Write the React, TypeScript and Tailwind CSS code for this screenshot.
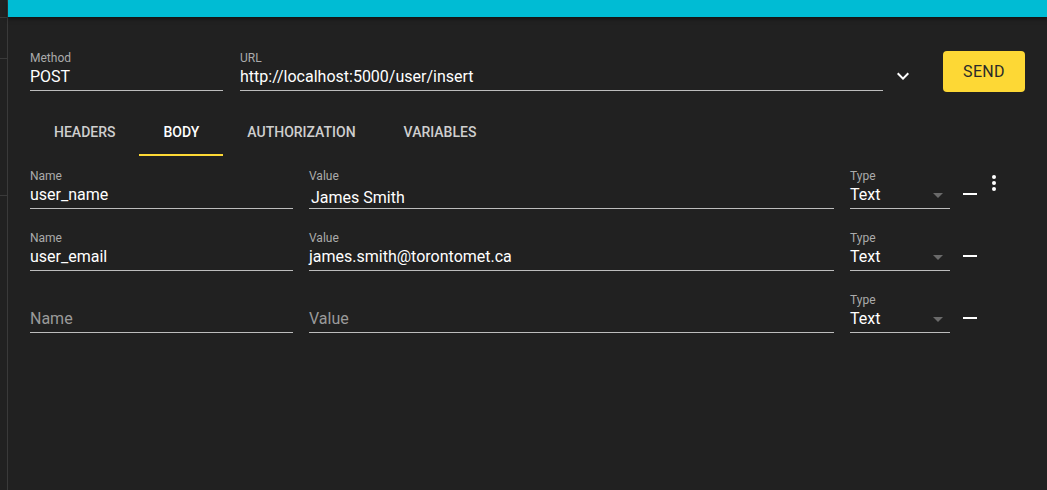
import React from 'react';

type FieldProps = {
  label?: string;
  value?: string;
  placeholder?: string;
  className?: string;
  inputClass?: string;
  children?: React.ReactNode;
};

function Field({ label, value, placeholder, className = '', inputClass = 'pt-[2px] pb-[4px]', children }: FieldProps) {
  return (
    <div className={`flex flex-col ${className}`}>
      <div className="h-[14px] text-[12px] leading-[14px] text-[#ababab]">{label ?? ''}</div>
      <div className={`relative border-b border-[#bdbdbd] text-[16px] leading-[19px] ${inputClass}`}>
        <div className="h-[19px] whitespace-nowrap">
          {value ? (
            <span className="text-white">{value}</span>
          ) : (
            <span className="text-[#9a9a9a]">{placeholder}</span>
          )}
        </div>
        {children}
      </div>
    </div>
  );
}

function MinusIcon() {
  return (
    <svg width="24" height="24" viewBox="0 0 24 24" fill="#ffffff">
      <path d="M19 13H5v-2h14v2z" />
    </svg>
  );
}

function DropArrow() {
  return (
    <svg className="absolute right-0 top-0" width="24" height="24" viewBox="0 0 24 24" fill="#6a6a6a">
      <path d="M7 10l5 5 5-5z" />
    </svg>
  );
}

const rows = [
  { name: 'user_name', value: 'James Smith', more: true },
  { name: 'user_email', value: 'james.smith@torontomet.ca', more: false },
  { name: '', value: '', more: false },
];

const tabs = ['HEADERS', 'BODY', 'AUTHORIZATION', 'VARIABLES'];

export default function App() {
  return (
    <div className="w-full h-[490px] bg-[#212121] flex font-['Roboto',sans-serif] overflow-hidden">
      {/* Collapsed sidebar */}
      <div className="w-[8px] h-full border-r border-[#3a3a3a] flex flex-col">
        <div className="h-[18px] border-b border-[#3a3a3a]" />
        <div className="h-[41px] border-b border-[#3a3a3a]" />
        <div className="h-[137px] border-b border-[#3a3a3a]" />
      </div>

      <div className="flex-1 flex flex-col">
        {/* App bar */}
        <div className="h-[17px] bg-[#00bcd4] shadow-[0_2px_4px_rgba(0,0,0,0.5)]" />

        <div className="px-[22px] pt-[34px] flex flex-col">
          {/* Request line */}
          <div className="flex items-start">
            <Field label="Method" value="POST" className="w-[193px]" />
            <Field label="URL" value="http://localhost:5000/user/insert" className="flex-1 ml-[17px]" />
            <div className="ml-[8px] mt-[13px] w-[24px] h-[24px]">
              <svg width="24" height="24" viewBox="0 0 24 24" fill="#ffffff">
                <path d="M16.59 8.59 12 13.17 7.41 8.59 6 10l6 6 6-6z" />
              </svg>
            </div>
            <button className="ml-[28px] w-[82px] h-[41px] rounded-[4px] bg-[#fdd835] text-[#2a2a2a] text-[16px] leading-none tracking-[0.02em]">
              SEND
            </button>
          </div>

          {/* Tabs */}
          <div className="flex mt-[16px] h-[48px]">
            {tabs.map((t) => (
              <div
                key={t}
                className={`h-[48px] px-[24px] pt-[2px] flex items-center border-b-2 text-[14px] leading-5 font-medium ${
                  t === 'BODY' ? 'border-[#fdd835] text-white' : 'border-transparent text-[#cfcfcf]'
                }`}
              >
                {t}
              </div>
            ))}
          </div>

          {/* Body params */}
          <div className="mt-[13px] flex flex-col gap-[22px]">
            {rows.map((r, i) => (
              <div key={i} className="flex items-end">
                <Field label={r.name ? 'Name' : ''} value={r.name} placeholder="Name" className="w-[263px]" />
                <Field
                  label={r.value ? 'Value' : ''}
                  value={r.value}
                  placeholder="Value"
                  className="w-[525px] ml-[16px]"
                  inputClass={i === 0 ? 'pt-[5px] pb-[1px] pl-[2px]' : 'pt-[2px] pb-[4px]'}
                />
                <Field label="Type" value="Text" className="w-[100px] ml-[16px]">
                  <DropArrow />
                </Field>
                <div className="ml-[8px] mb-[3px] w-[24px] h-[24px]">
                  <MinusIcon />
                </div>
                {r.more && (
                  <div className="self-start mt-[2px] w-[24px] h-[24px]">
                    <svg width="24" height="24" viewBox="0 0 24 24" fill="#ffffff">
                      <circle cx="12" cy="6" r="2" />
                      <circle cx="12" cy="12" r="2" />
                      <circle cx="12" cy="18" r="2" />
                    </svg>
                  </div>
                )}
              </div>
            ))}
          </div>
        </div>
      </div>
    </div>
  );
}
